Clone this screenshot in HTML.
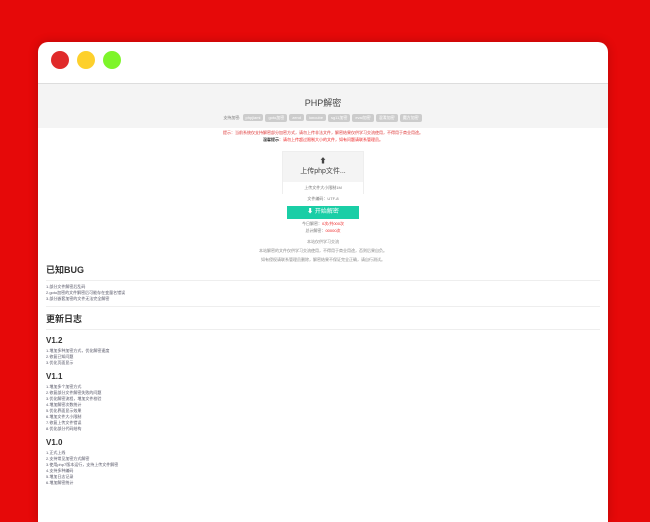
<!DOCTYPE html>
<html><head><meta charset="utf-8"><style>
*{margin:0;padding:0;box-sizing:border-box}
body{width:650px;height:500px;background:#e60909;overflow:hidden;font-family:"Liberation Sans","Noto Sans CJK SC",sans-serif;position:relative}
.win{position:absolute;left:38px;top:42px;width:570px;height:480px;background:#fff;border-radius:10px 10px 0 0;overflow:hidden;box-shadow:0 0 10px rgba(0,0,0,.2)}
.dot{position:absolute;top:51px;width:18px;height:18px;border-radius:50%}
.bar{height:42px;border-bottom:1px solid #ddd}
.hd{background:#f4f4f4;height:44px;text-align:center;padding-top:12px}
.hd h1{font-size:9px;font-weight:normal;color:#444}
.tags{font-size:4px;color:#777;margin-top:5px}
.tags span{display:inline-block;background:#ccc;color:#fff;border-radius:2px;padding:1px 3px;margin:0 1px;font-size:4px}
.c{text-align:center;font-size:4px}
.up{width:82px;margin:8px auto 0;border:1px solid #eee;border-bottom:none;height:43px}
.up .t{background:#f4f4f4;height:30px;font-size:7px;color:#444;padding-top:4px}
.btn{width:72px;height:13px;background:#1acea6;color:#fff;font-size:6px;margin:4px auto 0;line-height:13px;text-align:center}
.s{padding:0 8px}
h2{font-size:9px;font-weight:bold;color:#333;margin-top:0;padding-bottom:4px;border-bottom:1px solid #eee}
h3{font-size:8px;font-weight:bold;color:#333;margin:6px 0 3px}
p{font-size:4px;color:#556;line-height:6px}
</style></head><body>
<div class="win">
<div class="bar"></div>
<div class="hd"><h1>PHP解密</h1><div class="tags">支持加密: <span>phpjiami</span><span>goto加密</span><span>zend</span><span>ioncube</span><span>sg11加密</span><span>eval加密</span><span>混淆加密</span><span>魔方加密</span></div></div>
<div class="c" style="color:#d33;margin-top:2px">提示：当前系统仅支持解密部分加密方式，请勿上传非法文件，解密结果仅供学习交流使用，不得用于商业用途。</div>
<div class="c" style="color:#e22;margin-top:1px"><b style="color:#333">温馨提示</b>：请勿上传超过限制大小的文件，如有问题请联系管理员。</div>
<div class="up"><div class="t c" style="font-size:7px">⬆<br>上传php文件...</div><div class="c" style="color:#777;padding-top:3px">上传文件大小限制1M</div></div>
<div class="c" style="color:#777;margin-top:2px">文件编码：UTF-8</div>
<div class="btn">⬇ 开始解密</div>
<div class="c" style="color:#777;margin-top:2px">今日解密：<span style="color:#e22">0次/共000次</span></div>
<div class="c" style="color:#777;margin-top:1px">总计解密：<span style="color:#e22">00000次</span></div>
<div class="c" style="color:#888;margin-top:5px">本站仅供学习交流</div>
<div class="c" style="color:#888;margin-top:3px">本站解密的文件仅供学习交流使用，不得用于商业用途，否则后果自负。</div>
<div class="c" style="color:#888;margin-top:3px">如有侵权请联系管理员删除，解密结果不保证完全正确，请自行测试。</div>
<div class="s">
<h2>已知BUG</h2>
<p style="margin-top:3px">1.部分文件解密后乱码<br>2.goto加密的文件解密后可能存在变量名错误<br>3.部分嵌套加密的文件无法完全解密</p>
<div style="border-top:1px solid #eee;margin-top:4px"></div>
<h2 style="margin-top:5px">更新日志</h2>
<h3>V1.2</h3>
<p>1.增加多种加密方式，优化解密速度<br>2.修复已知问题<br>3.优化页面显示</p>
<h3>V1.1</h3>
<p>1.增加多个加密方式<br>2.修复部分文件解密失败的问题<br>3.优化解密流程，增加文件校验<br>4.增加解密次数统计<br>5.优化界面显示效果<br>6.增加文件大小限制<br>7.修复上传文件错误<br>8.优化部分代码结构</p>
<h3>V1.0</h3>
<p>1.正式上线<br>2.支持常见加密方式解密<br>3.使用php7版本运行，支持上传文件解密<br>4.支持多种编码<br>5.增加日志记录<br>6.增加解密统计</p>
</div>
</div>
<div class="dot" style="left:51px;background:#e02a2a"></div>
<div class="dot" style="left:77px;background:#fdd02c"></div>
<div class="dot" style="left:103px;background:#7ef52a"></div>
</body></html>
